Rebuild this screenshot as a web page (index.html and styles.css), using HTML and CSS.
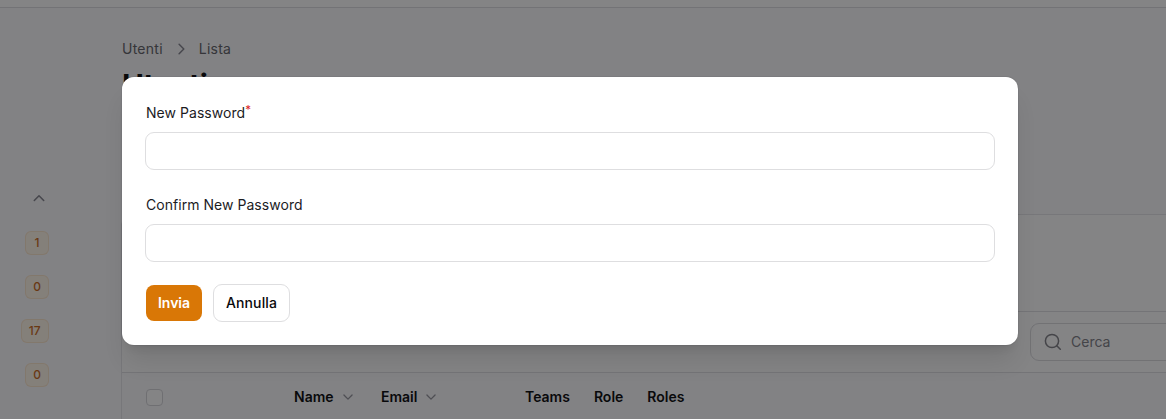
FILE: index.html
```html
<!DOCTYPE html>
<html lang="it">
<head>
<meta charset="utf-8">
<title>Utenti</title>
<link rel="stylesheet" href="styles.css">
</head>
<body>
<div class="page">
  <header class="topbar"></header>
  <div class="layout">
    <nav class="sidebar">
      <svg class="group-toggle" viewBox="0 0 20 20"><path d="M5.3 12.5 10 7.8l4.7 4.7"/></svg>
      <span class="badge">1</span>
      <span class="badge">0</span>
      <span class="badge">17</span>
      <span class="badge">0</span>
    </nav>
    <main class="main">
      <div class="breadcrumbs">
        <span>Utenti</span>
        <svg class="crumb-sep" viewBox="0 0 20 20"><path d="M8.1 5.3 12.8 10l-4.7 4.7"/></svg>
        <span>Lista</span>
      </div>
      <h1 class="heading">Utenti</h1>
      <section class="table-card">
        <div class="card-header"></div>
        <div class="toolbar">
          <div class="search">
            <svg class="search-icon" viewBox="0 0 20 20"><circle cx="9" cy="9" r="6.6"/><path d="m13.8 13.8 3.5 3.5"/></svg>
            <span>Cerca</span>
          </div>
        </div>
        <div class="table-head">
          <span class="checkbox"></span>
          <span class="th name">Name <svg class="sort" viewBox="0 0 20 20"><path d="m4.2 7.2 5.8 5.8 5.8-5.8"/></svg></span>
          <span class="th email">Email <svg class="sort" viewBox="0 0 20 20"><path d="m4.2 7.2 5.8 5.8 5.8-5.8"/></svg></span>
          <span class="th">Teams</span>
          <span class="th">Role</span>
          <span class="th">Roles</span>
        </div>
      </section>
    </main>
  </div>
</div>
<div class="overlay">
  <form class="modal">
    <label class="label" for="pw">New Password<sup class="required">*</sup></label>
    <input class="input" id="pw" type="password">
    <label class="label" for="pw2">Confirm New Password</label>
    <input class="input" id="pw2" type="password">
    <div class="actions">
      <button class="btn primary" type="button">Invia</button>
      <button class="btn secondary" type="button">Annulla</button>
    </div>
  </form>
</div>
</body>
</html>
```

FILE: styles.css
```css
* { box-sizing: border-box; }
body {
  margin: 0;
  height: 419px;
  overflow: hidden;
  font: 400 14px/20px Inter, sans-serif;
  color: #09090b;
  background: #fbfbfd;
}
svg { fill: none; stroke: currentColor; stroke-linecap: round; stroke-linejoin: round; flex: none; }
.page { height: 419px; overflow: hidden; }
.topbar { height: 8px; background: #fefeff; border-bottom: 1px solid #dcdce0; }
.layout { display: flex; }
.sidebar {
  width: 122px;
  padding: 180px 73px 0 0;
  display: flex;
  flex-direction: column;
  align-items: flex-end;
  gap: 20px;
}
.group-toggle { width: 20px; height: 20px; stroke-width: 1.6; color: #85858e; margin-bottom: 3px; }
.badge {
  min-width: 24px;
  height: 24px;
  padding: 0 8px;
  border-radius: 6px;
  background: #fff6e8;
  box-shadow: inset 0 0 0 1px rgba(217, 119, 6, .12);
  color: #c9681c;
  font: 500 12px/24px Inter, sans-serif;
  text-align: center;
}
.badge:nth-of-type(3) { padding-right: 8.5px; }
.main { flex: 1; min-width: 0; padding-top: 31px; }
.breadcrumbs { display: flex; align-items: center; gap: 8px; font-weight: 400; letter-spacing: .25px; color: #626268; }
.crumb-sep { width: 20px; height: 20px; stroke-width: 1.5; color: #85858e; }
.heading { margin: 8px 0 111px; font-size: 30px; line-height: 36px; font-weight: 700; letter-spacing: -.5px; }
.table-card {
  margin-left: -1px;
  height: 400px;
  border: 1px solid #e4e4e8;
  border-right: 0;
  border-radius: 12px 0 0;
  background: #fefeff;
}
.card-header { height: 97px; border-bottom: 1px solid #dedee2; }
.toolbar { height: 61px; padding: 11px 0 0 908px; border-bottom: 1px solid #dedee2; }
.search {
  width: 240px;
  height: 38px;
  padding-left: 12px;
  border: 1px solid #dadadd;
  border-radius: 9px;
  display: flex;
  align-items: center;
  gap: 8px;
  color: #808086;
}
.search-icon { width: 20px; height: 20px; stroke-width: 1.5; }
.table-head { display: flex; align-items: center; height: 48px; padding-left: 24px; background: #fbfbfd; font-weight: 570; }
.checkbox { width: 17px; height: 17px; border: 1px solid #d4d4d8; border-radius: 4px; background: #fefeff; margin: 0 131px 0 0; }
.th { display: flex; align-items: center; gap: 4px; margin-right: 24px; }
.name { width: 63px; }
.email { width: 60px; margin-right: 84px; }
.sort { width: 20px; height: 20px; padding: 3px; stroke-width: 1.9; color: #94949c; }
.overlay { position: absolute; inset: 0; display: flex; align-items: flex-start; padding: 77px 0 0 122px; background: rgba(9, 9, 11, .5); }
.modal {
  width: 896px;
  height: 268px;
  padding: 26px 23px 0;
  border-radius: 12px;
  background: #fff;
  box-shadow: 0 20px 25px -5px rgba(0,0,0,.1), 0 8px 10px -6px rgba(0,0,0,.1), 0 0 0 1px rgba(9,9,11,.05);
}
.label { display: block; height: 20px; margin: 0 1px 9px; font-weight: 400; letter-spacing: .04px; color: #1c1c1f; }
.required { color: #dc2626; font-size: 11.5px; line-height: 0; vertical-align: 4px; }
.input { display: block; width: 850px; height: 38px; margin: 0 0 25px; border: 1px solid #dedee0; border-radius: 9px; background: #fff; }
.actions { display: flex; align-items: center; gap: 11px; margin: -3px 0 0 1px; }
.btn { border: 0; border-radius: 8px; height: 36px; padding: 0; width: 56px; font: 600 14px/20px Inter, sans-serif; color: #09090b; background: #fff; }
.btn.primary { background: #d97706; color: #fff; }
.btn.secondary { width: 77px; height: 38px; border: 1px solid #dedee0; border-radius: 9px; font-weight: 500; letter-spacing: .1px; }
```
